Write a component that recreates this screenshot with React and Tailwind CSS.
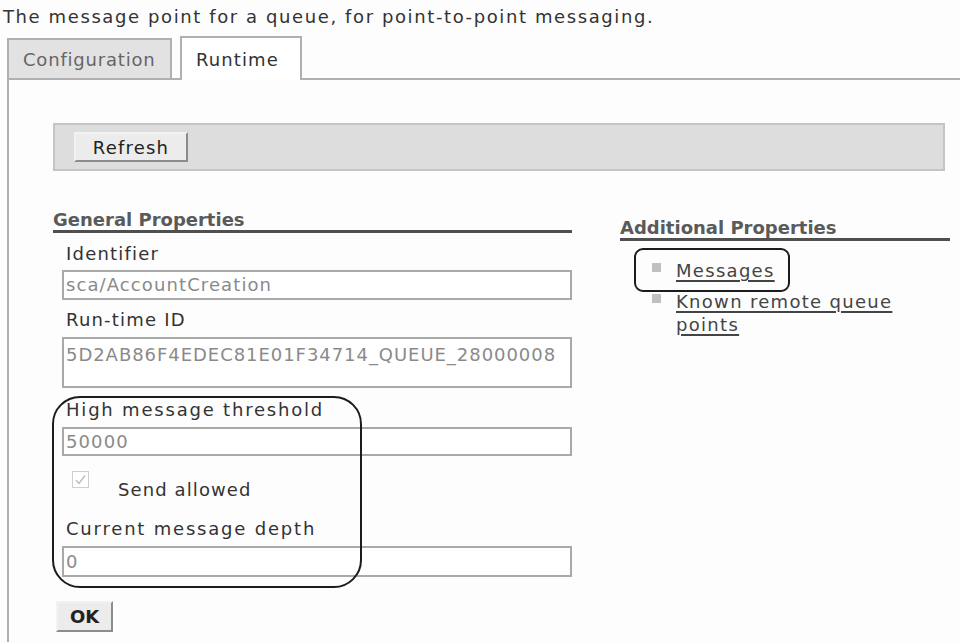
import React from 'react';

const font = { fontFamily: '"DejaVu Sans", Verdana, sans-serif' };

function Label({ children, className = '' }) {
  return (
    <div className={`pl-[13px] text-[18px] text-[#333] h-[20px] leading-[20px] ${className}`}>
      {children}
    </div>
  );
}

function Input({ value, className = '' }) {
  return (
    <div
      className={`ml-[9px] border-2 border-[#a9a9a9] bg-white text-[18px] text-[#8a8a8a] pl-[2px] ${className}`}
    >
      {value}
    </div>
  );
}

function Button({ children, className = '' }) {
  return (
    <button
      className={`border-2 border-t-[#f2f2f2] border-l-[#f2f2f2] border-r-[#8c8c8c] border-b-[#8c8c8c] bg-[#ececec] text-[18px] text-[#222] ${className}`}
    >
      {children}
    </button>
  );
}

export default function App() {
  return (
    <div className="w-[960px] h-[642px] overflow-hidden bg-[#fdfdfd] text-[#333]" style={font}>
      <p className="pl-[3px] pt-[7px] text-[18px] leading-[20px] tracking-[1.6px] h-[36px]">
        The message point for a queue, for point-to-point messaging.
      </p>

      {/* tab strip */}
      <div className="flex items-end h-[44px] pl-[7px]">
        <div className="h-[42px] w-[165px] bg-[#e2e2e2] border-2 border-[#b0b0b0] flex items-center pl-[14px] text-[18px] tracking-[0.8px] text-[#666]">
          Configuration
        </div>
        <div className="w-[8px] border-b-2 border-[#b0b0b0]" />
        <div className="h-[44px] w-[122px] bg-white border-2 border-b-0 border-[#b0b0b0] flex items-center pl-[14px] text-[18px] tracking-[1.1px] text-[#333]">
          Runtime
        </div>
        <div className="flex-1 border-b-2 border-[#b0b0b0]" />
      </div>

      {/* tab body */}
      <div className="ml-[7px] border-l-2 border-[#b0b0b0] h-[600px] pt-[43px] pl-[44px]">
        <div className="w-[892px] h-[48px] bg-[#dddddd] border-2 border-[#c4c4c4] flex items-center pl-[19px]">
          <Button className="h-[30px] w-[114px] tracking-[1.2px]">Refresh</Button>
        </div>

        <div className="flex mt-[39px]">
          {/* general properties */}
          <div className="w-[519px] relative">
            <div className="text-[18px] font-bold text-[#5a5a5a] h-[20px] leading-[20px]">General Properties</div>
            <div className="h-[3px] bg-[#4f4f4f]" />

            <Label className="mt-[11px] tracking-[1.2px]">Identifier</Label>
            <Input value="sca/AccountCreation" className="mt-[6px] h-[30px] leading-[26px] tracking-[1.1px]" />

            <Label className="mt-[10px] tracking-[1.2px]">Run-time ID</Label>
            <Input value="5D2AB86F4EDEC81E01F34714_QUEUE_28000008" className="mt-[7px] h-[51px] pt-[5px] leading-[22px] tracking-[0.95px]" />

            <Label className="mt-[12px] tracking-[1.8px]">High message threshold</Label>
            <Input value="50000" className="mt-[7px] h-[29px] leading-[25px] tracking-[1.1px]" />

            <div className="flex mt-[15px] h-[30px] pl-[19px]">
              <span className="w-[17px] h-[17px] border border-[#cfcfcf] bg-white flex items-center justify-center">
                <svg width="13" height="13" viewBox="0 0 13 13">
                  <path d="M2 7 L5 10.5 L11 2.5" fill="none" stroke="#bdbdbd" strokeWidth="1.4" />
                </svg>
              </span>
              <span className="ml-[29px] self-end text-[18px] tracking-[1.1px] leading-[20px] text-[#333] mb-[1px]">
                Send allowed
              </span>
            </div>

            <Label className="mt-[18px] tracking-[1.8px]">Current message depth</Label>
            <Input value="0" className="mt-[7px] h-[31px] leading-[27px] tracking-[1.1px]" />

            <Button className="ml-[3px] mt-[24px] h-[31px] w-[57px] font-bold">OK</Button>

            {/* highlight ring around the threshold fields */}
            <div className="absolute -left-[1px] top-[186px] w-[310px] h-[192px] border-2 border-[#1c1c1c] rounded-[28px] pointer-events-none" />
          </div>

          {/* additional properties */}
          <div className="ml-[48px] w-[330px] mt-[8px] relative">
            <div className="text-[18px] font-bold text-[#5a5a5a] h-[20px] leading-[20px]">Additional Properties</div>
            <div className="h-[3px] bg-[#4f4f4f]" />
            <ul className="mt-[18px] pl-[32px] text-[18px] tracking-[1.3px] text-[#444]">
              <li className="flex items-start leading-[23px]">
                <span className="w-[9px] h-[9px] bg-[#c0c0c0] mt-[4px] mr-[15px] shrink-0" />
                <span className="underline underline-offset-[3px] decoration-[2px]">Messages</span>
              </li>
              <li className="flex items-start mt-[8px] leading-[23px]">
                <span className="w-[9px] h-[9px] bg-[#c0c0c0] mt-[4px] mr-[15px] shrink-0" />
                <span className="underline underline-offset-[3px] decoration-[2px] w-[240px]">
                  Known remote queue points
                </span>
              </li>
            </ul>
            <div className="absolute left-[14px] top-[30px] w-[156px] h-[44px] border-2 border-[#1c1c1c] rounded-[9px] pointer-events-none" />
          </div>
        </div>
      </div>
    </div>
  );
}
